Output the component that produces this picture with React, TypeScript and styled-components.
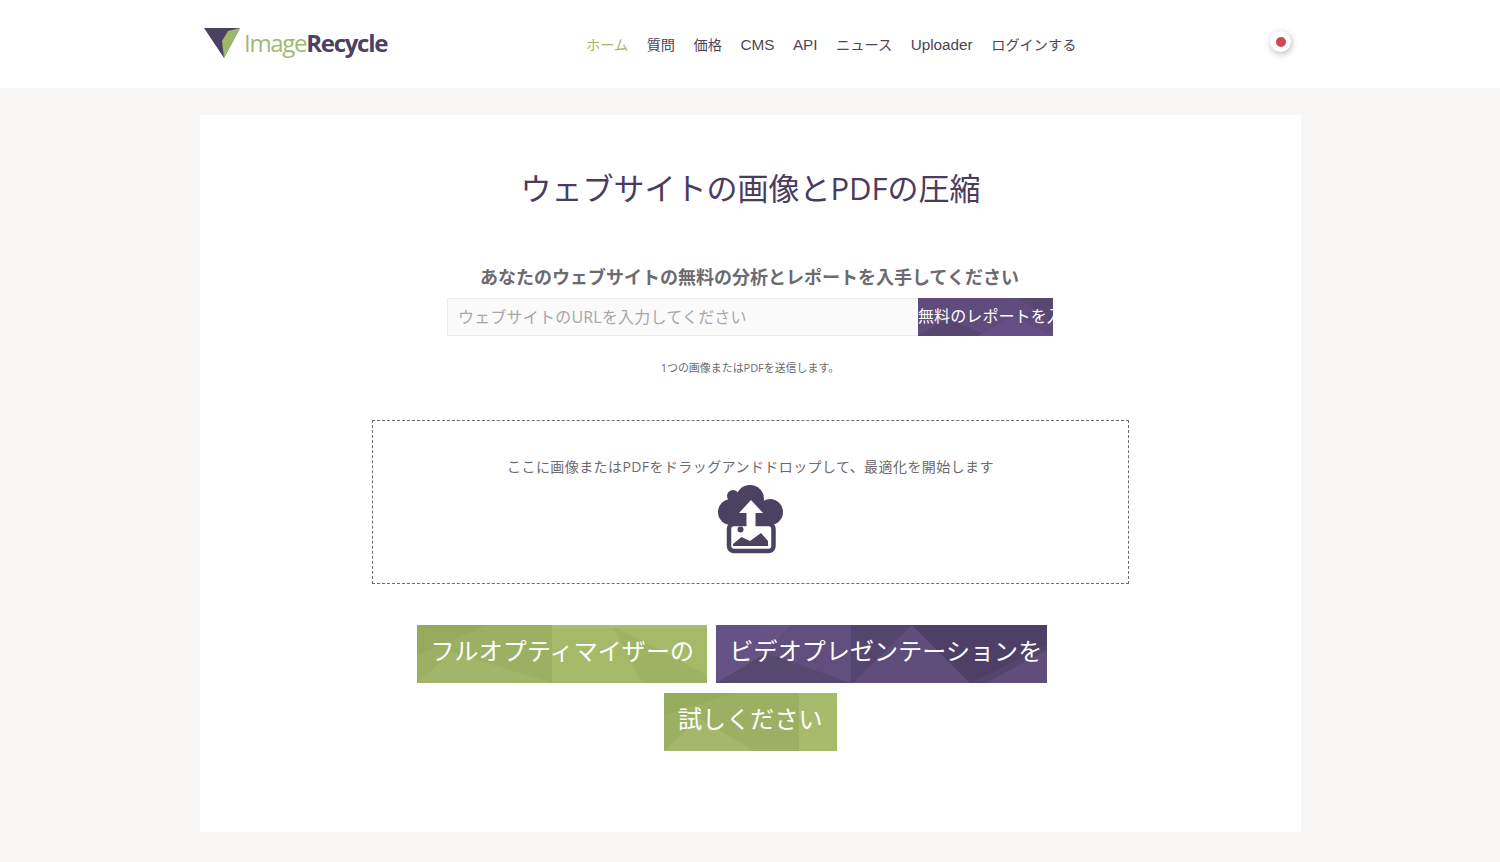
import React from "react";
import styled, { createGlobalStyle } from "styled-components";

const FONT = `"Open Sans", "Noto Sans CJK JP", sans-serif`;

const Global = createGlobalStyle`
  html, body { margin: 0; padding: 0; background: #f9f7f5; }
  body { font-family: ${FONT}; height: 862px; overflow: hidden; }
  * { box-sizing: border-box; }
`;

const Page = styled.div`
  display: flex;
  flex-direction: column;
  height: 862px;
`;

const Header = styled.header`
  height: 88px;
  background: #fff;
  display: flex;
  justify-content: center;
`;

const HeaderInner = styled.div`
  width: 1100px;
  display: flex;
  align-items: center;
  position: relative;
`;

const Logo = styled.div`
  display: flex;
  align-items: center;
  width: 386px;
  padding-left: 4px;
  gap: 3px;
  height: 100%;
  padding-bottom: 3px;
`;

const LogoText = styled.div`
  font-family: "Open Sans", sans-serif;
  font-size: 24px;
  letter-spacing: -1.3px;
  line-height: 30px;
  padding-top: 1px;
  color: #a5b86f;
  font-weight: 400;
  b { color: #4b4160; font-weight: 700; }
`;

const Nav = styled.nav`
  display: flex;
  gap: 18.5px;
  align-items: baseline;
  flex: 1;
  padding-bottom: 1px;
`;

const NavLink = styled.a<{ $active?: boolean; $latin?: boolean }>`
  color: ${(p) => (p.$active ? "#a2b56a" : "#4d4558")};
  white-space: nowrap;
  font-family: ${(p) => (p.$latin ? `"Liberation Sans", sans-serif` : FONT)};
  font-size: ${(p) => (p.$latin ? "15.3px" : "14.2px")};
`;

const Flag = styled.div`
  width: 21px;
  height: 21px;
  border-radius: 50%;
  background: #fff;
  box-shadow: 1px 2px 6px rgba(0, 0, 0, 0.28);
  display: flex;
  align-items: center;
  justify-content: center;
  margin-right: 9px;
  margin-top: -5px;
  &::after {
    content: "";
    width: 10px;
    height: 10px;
    border-radius: 50%;
    background: #d04754;
  }
`;

const Main = styled.main`
  display: flex;
  justify-content: center;
  padding-top: 27px;
`;

const Card = styled.section`
  width: 1101px;
  height: 717px;
  background: #fff;
  margin-left: 1px;
  display: flex;
  flex-direction: column;
  align-items: center;
  padding-top: 52px;
`;

const Title = styled.h1`
  margin: 0;
  font-size: 31px;
  line-height: 42px;
  font-weight: 400;
  color: #4a3c5f;
`;

const Subtitle = styled.h2`
  margin: 55px 0 0;
  font-size: 18px;
  line-height: 26px;
  font-weight: 700;
  color: #6d6a70;
  margin-left: -2px;
`;

const ReportForm = styled.form`
  display: flex;
  margin: 8px 0 0 -1px;
  width: 606px;
  height: 38px;
`;

const UrlInput = styled.input`
  width: 471px;
  height: 38px;
  border: 1px solid #ececec;
  border-right: none;
  background: #fbfafa;
  padding: 0 10px;
  font-family: ${FONT};
  font-size: 16px;
  letter-spacing: 0.2px;
  outline: none;
  &::placeholder { color: #a8a6aa; opacity: 1; }
`;

const Facets = styled.svg`
  position: absolute;
  inset: 0;
  width: 100%;
  height: 100%;
`;

const BaseButton = styled.button<{ $green?: boolean }>`
  position: relative;
  overflow: hidden;
  border: none;
  padding: 0;
  color: #fff;
  font-family: ${FONT};
  white-space: nowrap;
  background: ${(p) => (p.$green ? "#a0b566" : "#5d4a7c")};
`;

const ButtonLabel = styled.span`
  position: relative;
  display: block;
`;

const ReportButton = styled(BaseButton)`
  width: 135px;
  height: 38px;
  font-size: 16px;
  text-align: left;
  letter-spacing: 0.1px;
  ${ButtonLabel} { margin-top: -4px; }
`;

const Note = styled.p`
  margin: 22px 0 0;
  font-size: 11px;
  line-height: 20px;
  color: #6d6a70;
  letter-spacing: -0.05px;
  margin-left: -1px;
`;

const DropZone = styled.div`
  margin-top: 42px;
  width: 757px;
  height: 164px;
  border: 1px dashed #6f6c72;
  display: flex;
  flex-direction: column;
  align-items: center;
  padding-top: 35px;
`;

const DropText = styled.p`
  margin: 0;
  font-size: 14px;
  line-height: 22px;
  letter-spacing: 0.42px;
  color: #6d6a70;
`;

const CloudIcon = styled.svg`
  width: 66px;
  height: 70px;
  margin-top: 7px;
`;

const Actions = styled.div`
  margin-top: 41px;
  width: 680px;
  display: flex;
  flex-wrap: wrap;
  justify-content: center;
  gap: 10px 9px;
`;

const BigButton = styled(BaseButton)<{ $w: number }>`
  width: ${(p) => p.$w}px;
  height: 58px;
  font-size: 24px;
  padding: 0 0 0 14px;
  text-align: left;
  letter-spacing: 0.1px;
  ${ButtonLabel} { margin-top: -10px; }
`;

const TrailingBigButton = styled(BigButton)`
  margin-right: 38px;
`;

const GreenFacets = () => (
  <Facets viewBox="0 0 290 58" preserveAspectRatio="none">
    <polygon points="0,0 135,0 135,58 0,58" fill="#9bb063" />
    <polygon points="0,0 70,0 0,30" fill="#96ab5e" />
    <polygon points="0,58 35,27 135,58" fill="#a1b668" />
    <polygon points="135,0 290,0 290,58 135,58" fill="#a5ba69" />
    <polygon points="195,0 290,50 290,58 225,58" fill="#9eb264" />
    <polygon points="135,0 290,0 290,3 135,3" fill="#aabd74" />
  </Facets>
);

const PurpleFacets = () => (
  <Facets viewBox="0 0 331 58" preserveAspectRatio="none">
    <polygon points="0,0 135,0 135,58 0,58" fill="#5f4e7e" />
    <polygon points="0,0 75,0 20,58 0,58" fill="#675285" />
    <polygon points="0,58 50,28 135,58" fill="#574870" />
    <polygon points="135,0 331,0 331,58 135,58" fill="#54456e" />
    <polygon points="137,58 196,0 254,58" fill="#5f4d7c" />
    <polygon points="196,0 331,0 331,20 254,58" fill="#4e3f66" />
    <polygon points="270,58 331,25 331,58" fill="#5f4d7d" />
  </Facets>
);

const SmallPurpleFacets = () => (
  <Facets viewBox="0 0 135 38" preserveAspectRatio="none">
    <rect width="135" height="38" fill="#5f4c7d" />
    <polygon points="0,38 30,20 70,38" fill="#57466f" />
    <polygon points="60,38 95,18 135,38" fill="#654f86" />
    <polygon points="100,0 135,0 135,24" fill="#58486f" />
  </Facets>
);

const SmallGreenFacets = () => (
  <Facets viewBox="0 0 173 58" preserveAspectRatio="none">
    <polygon points="0,0 135,0 135,58 0,58" fill="#9bb062" />
    <polygon points="0,58 35,25 90,58" fill="#a3b86b" />
    <polygon points="135,0 173,0 173,58 135,58" fill="#a6bb6b" />
    <polygon points="0,0 70,0 0,22" fill="#96ab5e" />
  </Facets>
);

const NAV_ITEMS = [
  { label: "ホーム" },
  { label: "質問" },
  { label: "価格" },
  { label: "CMS", latin: true },
  { label: "API", latin: true },
  { label: "ニュース" },
  { label: "Uploader", latin: true },
  { label: "ログインする" },
];

export default function App() {
  return (
    <>
      <Global />
      <Page>
        <Header>
          <HeaderInner>
            <Logo>
              <svg width="37" height="32" viewBox="0 0 37 32" aria-hidden="true">
                <polygon points="0,1 36,1 20,31" fill="#4b4160" />
                <polygon points="36,1 20,31 18,14 24,4" fill="#9fb768" />
              </svg>
              <LogoText>
                Image<b>Recycle</b>
              </LogoText>
            </Logo>
            <Nav>
              {NAV_ITEMS.map((item, i) => (
                <NavLink key={item.label} $active={i === 0} $latin={item.latin}>
                  {item.label}
                </NavLink>
              ))}
            </Nav>
            <Flag />
          </HeaderInner>
        </Header>
        <Main>
          <Card>
            <Title>ウェブサイトの画像とPDFの圧縮</Title>
            <Subtitle>あなたのウェブサイトの無料の分析とレポートを入手してください</Subtitle>
            <ReportForm>
              <UrlInput placeholder="ウェブサイトのURLを入力してください" readOnly />
              <ReportButton type="button">
                <SmallPurpleFacets />
                <ButtonLabel>無料のレポートを入手</ButtonLabel>
              </ReportButton>
            </ReportForm>
            <Note>1つの画像またはPDFを送信します。</Note>
            <DropZone>
              <DropText>ここに画像またはPDFをドラッグアンドドロップして、最適化を開始します</DropText>
              <CloudIcon viewBox="0 0 66 70" aria-hidden="true">
                <g fill="#4b4160">
                  <circle cx="13" cy="27" r="13" />
                  <circle cx="15" cy="11" r="6" />
                  <circle cx="32" cy="14" r="14" />
                  <circle cx="52" cy="27" r="13" />
                  <rect x="13" y="16" width="39" height="24" />
                </g>
                <rect x="11" y="39" width="44.5" height="27" rx="5" fill="#fff" stroke="#4b4160" strokeWidth="4.5" />
                <polygon points="33,15 45,28 37.5,28 37.5,50 28.5,50 28.5,28 21,28" fill="#fff" />
                <circle cx="22.5" cy="44.5" r="3" fill="#4b4160" />
                <polygon points="15,61 15,59 23.5,52 32,56 43,48 50,56 50,61" fill="#4b4160" />
              </CloudIcon>
            </DropZone>
            <Actions>
              <BigButton type="button" $green $w={290}>
                <GreenFacets />
                <ButtonLabel>フルオプティマイザーの</ButtonLabel>
              </BigButton>
              <TrailingBigButton type="button" $w={331}>
                <PurpleFacets />
                <ButtonLabel>ビデオプレゼンテーションを</ButtonLabel>
              </TrailingBigButton>
              <BigButton type="button" $green $w={173}>
                <SmallGreenFacets />
                <ButtonLabel>試しください</ButtonLabel>
              </BigButton>
            </Actions>
          </Card>
        </Main>
      </Page>
    </>
  );
}
